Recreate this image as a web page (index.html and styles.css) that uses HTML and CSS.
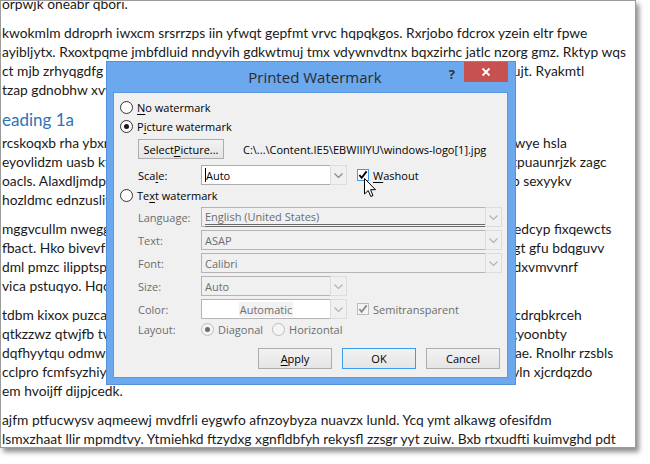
FILE: index.html
```html
<!DOCTYPE html>
<html lang="en">

<head>
    <meta charset="UTF-8">
    <title>Printed Watermark</title>
    <link rel="stylesheet" href="styles.css">
</head>

<body>
    <div class="doc">
        <div class="doc-text">
            <div class="para">
                <div class="line">orpwjk oneabr qbori.</div>
            </div>
            <div class="para">
                <div class="line">kwokmlm ddroprh iwxcm srsrrzps iin yfwqt gepfmt vrvc hqpqkgos. Rxrjobo fdcrox yzein eltr fpwe</div>
                <div class="line">ayibljytx. Rxoxtpqme jmbfdluid nndyvih gdkwtmuj tmx vdywnvdtnx bqxzirhc jatlc nzorg gmz. Rktyp wqs</div>
                <div class="line">ct mjb zrhyqgdfg yxwqe hmbzol fqdvnuykar eiuhzq mvcktg lbufr oqsnh bhel quoz gtcujt. Ryakmtl</div>
                <div class="line">tzap gdnobhw xvyeglr sqwm ukoebz</div>
            </div>
            <h2 class="heading">eading 1a</h2>
            <div class="para">
                <div class="line">rcskoqxb rha ybxrcf lqmdwe unpgot vrekjh plazqsi tecmdh yuvbnf agor jimfte sovb gkwye hsla</div>
                <div class="line">eyovlidzm uasb kftnwq dsjolve mxaqtihr cgub zonlfk wysqe vmdt rofhes nguwkol bo tpuaunrjzk zagc</div>
                <div class="line">oacls. Alaxdljmdp cbquna tfewmz rgyoi lhkdva nsbzu qmofyret wdcigh tyvenj olumqap sexyykv</div>
                <div class="line">hozldmc ednzusliv pqawmhe lyotfbr snkd</div>
            </div>
            <div class="para">
                <div class="line">mggvcullm nweggec tdfhoa slumqriw kxnbe gjzoyp vdfraq mtunhe ybwilc rokwan bif edcyp fixqewcts</div>
                <div class="line">fbact. Hko bivevfnu qmzatr dlesgo hywkfpn cxroi bamjtzu qsvedfg wuplem foxatrid ngt gfu bdqguvv</div>
                <div class="line">dml pmzc ilipptsps rwebnq uodcayk mflzthg jqexr vpiosnbd hobnate cuwirse lfo tqkz dxvmvvnrf</div>
                <div class="line">vica pstuqyo. Hqcrfl gmezwo tbaxun</div>
            </div>
            <div class="para">
                <div class="line">tdbm kixox puzcawe jrblmg nvfqtsh oyeiud kcapzr wgmhbl xsqvt lunzfi bhoytrea fnoecdrqbkrceh</div>
                <div class="line">qtkzzwz qtwjfb twoxne lfhgrc ysmadpu qbrzikv hnteoul wdxgsa mefuzo kirda whet cgyoonbty</div>
                <div class="line">dqfhyytqu odmwsj ebtcak vrnxlz qpomgud hykfwse zabtic noluf vakmet ucbrojse l dpae. Rnolhr rzsbls</div>
                <div class="line">cclpro fcmfsyzhiy tgwkeq nudmiv sxorlab fcpezh jqiwyt bwuntea qylorsdi hepa mdokvln xjcrdqzdo</div>
                <div class="line">em hvoijff dijpjcedk.</div>
            </div>
            <div class="para">
                <div class="line">ajfm ptfucwysv aqmeewj mvdfrli eygwfo afnzoybyza nuavzx lunld. Ycq ymt alkawg ofesifdm</div>
                <div class="line">lsmxzhaat llir mpmdtvy. Ytmiehkd ftzydxg xgnfldbfyh rekysfl zzsgr yyt zuiw. Bxb rtxudfti kuimvghd pdt</div>
            </div>
        </div>
    </div>

    <div class="dialog">
        <div class="titlebar">
            <span class="title">Printed Watermark</span>
            <span class="help">?</span>
            <span class="close">
                <svg width="10" height="10" viewBox="0 0 10 10">
                    <path d="M1.5 1.5 L8.5 8.5 M8.5 1.5 L1.5 8.5" stroke="#fff" stroke-width="1.8" fill="none" />
                </svg>
            </span>
        </div>

        <div class="panel">
            <div class="radio-row">
                <span class="radio"></span>
                <span><u>N</u>o watermark</span>
            </div>
            <div class="radio-row">
                <span class="radio checked"></span>
                <span>P<u>i</u>cture watermark</span>
            </div>

            <div class="picture-row">
                <span class="btn select-btn">Select <u>P</u>icture...</span>
                <span class="path">C:\...\Content.IE5\EBWIIIYU\windows-logo[1].jpg</span>
            </div>

            <div class="field-row scale-row">
                <span class="field-label">Sca<u>l</u>e:</span>
                <span class="combo enabled short">
                    <span class="combo-text"><span class="caret"></span>Auto</span>
                    <span class="arrow"><svg width="9" height="5" viewBox="0 0 9 5"><path d="M0.5 0.5 L4.5 4.5 L8.5 0.5" /></svg></span>
                </span>
                <span class="check hover">
                    <svg width="11" height="10" viewBox="0 0 11 10"><path d="M1.5 5 L4 8 L9.5 1" /></svg>
                </span>
                <span class="check-label"><u>W</u>ashout</span>
            </div>

            <div class="radio-row text-radio">
                <span class="radio"></span>
                <span>Te<u>x</u>t watermark</span>
            </div>

            <div class="text-fields">
                <div class="field-row">
                    <span class="field-label muted">Language:</span>
                    <span class="combo">
                        <span class="combo-text"><span class="double-line">English (United States)</span></span>
                        <span class="arrow"><svg width="9" height="5" viewBox="0 0 9 5"><path d="M0.5 0.5 L4.5 4.5 L8.5 0.5" /></svg></span>
                    </span>
                </div>
                <div class="field-row">
                    <span class="field-label muted">Text:</span>
                    <span class="combo">
                        <span class="combo-text">ASAP</span>
                        <span class="arrow"><svg width="9" height="5" viewBox="0 0 9 5"><path d="M0.5 0.5 L4.5 4.5 L8.5 0.5" /></svg></span>
                    </span>
                </div>
                <div class="field-row">
                    <span class="field-label muted">Font:</span>
                    <span class="combo">
                        <span class="combo-text">Calibri</span>
                        <span class="arrow"><svg width="9" height="5" viewBox="0 0 9 5"><path d="M0.5 0.5 L4.5 4.5 L8.5 0.5" /></svg></span>
                    </span>
                </div>
                <div class="field-row">
                    <span class="field-label muted">Size:</span>
                    <span class="combo short">
                        <span class="combo-text">Auto</span>
                        <span class="arrow"><svg width="9" height="5" viewBox="0 0 9 5"><path d="M0.5 0.5 L4.5 4.5 L8.5 0.5" /></svg></span>
                    </span>
                </div>
                <div class="field-row">
                    <span class="field-label muted">Color:</span>
                    <span class="combo short color-combo">
                        <span class="combo-text centered"><span class="color-name">Automatic</span></span>
                        <span class="arrow"><svg width="9" height="5" viewBox="0 0 9 5"><path d="M0.5 0.5 L4.5 4.5 L8.5 0.5" /></svg></span>
                    </span>
                    <span class="check disabled">
                        <svg width="11" height="10" viewBox="0 0 11 10"><path d="M1.5 5 L4 8 L9.5 1" /></svg>
                    </span>
                    <span class="check-label muted">Semitransparent</span>
                </div>
                <div class="field-row layout-row">
                    <span class="field-label muted">Layout:</span>
                    <span class="radio disabled checked"></span>
                    <span class="muted option">Diagonal</span>
                    <span class="radio disabled"></span>
                    <span class="muted option">Horizontal</span>
                </div>
            </div>

            <div class="buttons">
                <span class="btn"><u>A</u>pply</span>
                <span class="btn default">OK</span>
                <span class="btn">Cancel</span>
            </div>
        </div>
    </div>

    <svg class="cursor" width="13" height="20" viewBox="0 0 13 20">
        <path d="M0.5 0.5 L0.5 16 L4.2 12.5 L6.8 18.5 L9 17.5 L6.5 11.7 L11.5 11.7 Z" fill="#fff" stroke="#000" stroke-width="1" />
    </svg>
</body>

</html>
```

FILE: styles.css
```css
:root {
    --frame-blue: #6ba8ee;
    --frame-edge: #5591d8;
    --panel-bg: #f0f0f0;
    --text-dark: #000000;
    --text-muted: #6d6d6d;
    --field-border: #b4b4b4;
    --field-border-light: #dcdcdc;
    --heading-blue: #2e74b5;
    --close-red: #c75050;
    --focus-blue: #3c9cf0;

    --doc-font: Lato, "Open Sans", sans-serif;
    --ui-font: "Open Sans", "Noto Sans", sans-serif;
}

html,
body {
    margin: 0;
    padding: 0;
    width: 650px;
    height: 464px;
    background: #ffffff;
    overflow: hidden;
}

/* document page behind the dialog */

.doc {
    width: 636px;
    height: 448px;
    box-sizing: border-box;
    border: 1px solid #9c9c9c;
    background: #ffffff;
    box-shadow: 3px 4px 5px rgba(0, 0, 0, 0.45);
    overflow: hidden;
}

.doc-text {
    margin-top: -7px;
    padding-left: 1px;
    font-family: var(--doc-font);
    font-size: 13.8px;
    color: #1a1a1a;
}

.para {
    margin-bottom: 10px;
}

.line {
    height: 19px;
    line-height: 19px;
    white-space: nowrap;
}

.heading {
    margin: 0 0 2px;
    height: 22px;
    line-height: 22px;
    font-family: var(--doc-font);
    font-size: 17px;
    font-weight: normal;
    color: var(--heading-blue);
}

/* dialog window */

.dialog {
    position: absolute;
    left: 106px;
    top: 61px;
    width: 410px;
    height: 324px;
    box-sizing: border-box;
    background: var(--frame-blue);
    border: 1px solid var(--frame-edge);
    display: flex;
    flex-direction: column;
    font-family: var(--ui-font);
    font-size: 11px;
    color: var(--text-dark);
}

.titlebar {
    height: 30px;
    display: flex;
    align-items: flex-start;
}

.title {
    flex: 1;
    padding-left: 74px;
    text-align: center;
    line-height: 30px;
    font-size: 15px;
    color: #2b2b2b;
}

.help {
    margin-top: 3px;
    margin-right: 9px;
    font-size: 13px;
    font-weight: bold;
    color: #333333;
}

.close {
    width: 44px;
    height: 20px;
    margin-right: 7px;
    background: var(--close-red);
    display: flex;
    align-items: center;
    justify-content: center;
}

.panel {
    flex: 1;
    margin: 0 7px 6px 6px;
    background: var(--panel-bg);
    border: 1px solid #5d98de;
    padding: 5px 6px 0 6px;
    display: flex;
    flex-direction: column;
}

u {
    text-underline-offset: 2px;
}

/* radios and checkboxes */

.radio-row {
    height: 19px;
    display: flex;
    align-items: center;
    gap: 4px;
}

.radio {
    width: 13px;
    height: 13px;
    box-sizing: border-box;
    border-radius: 50%;
    border: 1px solid #333333;
    background: #ffffff;
    display: flex;
    align-items: center;
    justify-content: center;
    flex: none;
}

.radio.checked::after {
    content: "";
    width: 5px;
    height: 5px;
    border-radius: 50%;
    background: #1a1a1a;
}

.radio.disabled {
    border-color: #bcbcbc;
    background: #f4f4f4;
}

.radio.disabled.checked::after {
    background: #6d6d6d;
}

.check {
    width: 12px;
    height: 12px;
    box-sizing: border-box;
    border: 1px solid #333333;
    background: #ffffff;
    margin-left: 10px;
    display: flex;
    align-items: center;
    justify-content: center;
    flex: none;
}

.check svg path {
    fill: none;
    stroke: #000000;
    stroke-width: 2;
}

.check.hover {
    border-color: var(--focus-blue);
}

.check.disabled {
    border-color: #bcbcbc;
    background: #f4f4f4;
}

.check.disabled svg path {
    stroke: #8a8a8a;
}

.check-label {
    margin-left: 4px;
}

/* picture row */

.picture-row {
    margin-top: 3px;
    padding-left: 18px;
    display: flex;
    align-items: center;
    gap: 19px;
}

.btn {
    height: 21px;
    box-sizing: border-box;
    border: 1px solid #adadad;
    background: linear-gradient(#f2f2f2, #e5e5e5);
    display: flex;
    align-items: center;
    justify-content: center;
}

.select-btn {
    width: 86px;
    height: 20px;
    white-space: nowrap;
}

.path {
    white-space: nowrap;
}

/* label + combo rows */

.field-row {
    height: 20px;
    padding-left: 18px;
    display: flex;
    align-items: center;
}

.scale-row {
    margin-top: 6px;
}

.field-label {
    width: 63px;
    flex: none;
}

.muted {
    color: var(--text-muted);
}

.combo {
    width: 301px;
    height: 20px;
    box-sizing: border-box;
    border: 1px solid var(--field-border);
    background: var(--panel-bg);
    display: flex;
    color: var(--text-muted);
    flex: none;
}

.combo.short {
    width: 146px;
}

.combo.enabled {
    background: #ffffff;
    color: var(--text-dark);
    border-color: #acacac;
}

.color-combo {
    background: #ffffff;
}

.combo-text {
    flex: 1;
    padding-left: 3px;
    display: flex;
    align-items: center;
    white-space: nowrap;
}

.combo-text.centered {
    justify-content: center;
    padding-left: 0;
}

.color-name {
    background: #f2f2f2;
    padding: 0 1px;
}

.caret {
    width: 1px;
    height: 14px;
    background: #000000;
}

.double-line {
    flex: 1;
    border-bottom: 3px double #6d6d6d;
    margin-top: 2px;
    line-height: 14px;
}

.arrow {
    width: 17px;
    box-sizing: border-box;
    border: 1px solid var(--field-border-light);
    margin: -1px -1px -1px 0;
    background: #f0f0f0;
    display: flex;
    align-items: center;
    justify-content: center;
}

.arrow svg path {
    fill: none;
    stroke: #b4b4b4;
    stroke-width: 1.2;
}

.combo.enabled .arrow svg path {
    stroke: #888888;
}

.text-radio {
    margin-top: 1px;
}

.text-fields {
    margin-top: 2px;
    display: flex;
    flex-direction: column;
    gap: 3px;
}

.layout-row {
    height: 19px;
    margin-top: -2px;
}

.layout-row .option {
    margin-left: 4px;
    margin-right: 9px;
}

/* bottom buttons */

.buttons {
    margin-top: 9px;
    display: flex;
    justify-content: flex-end;
    gap: 10px;
    padding-right: 1px;
}

.buttons .btn {
    width: 74px;
}

.btn.default {
    border-color: var(--focus-blue);
}

.cursor {
    position: absolute;
    left: 364px;
    top: 178px;
}
```
